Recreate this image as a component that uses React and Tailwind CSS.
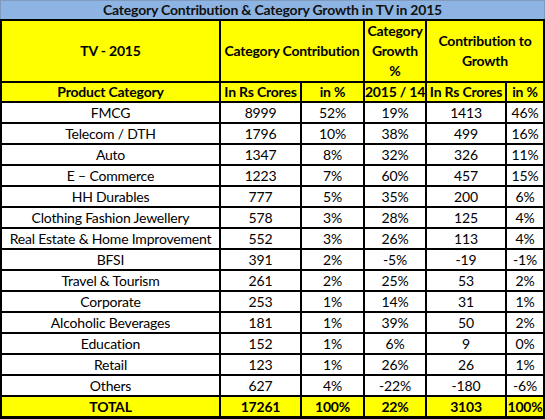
const rows = [
  ['FMCG', '8999', '52%', '19%', '1413', '46%'],
  ['Telecom / DTH', '1796', '10%', '38%', '499', '16%'],
  ['Auto', '1347', '8%', '32%', '326', '11%'],
  ['E – Commerce', '1223', '7%', '60%', '457', '15%'],
  ['HH Durables', '777', '5%', '35%', '200', '6%'],
  ['Clothing Fashion Jewellery', '578', '3%', '28%', '125', '4%'],
  ['Real Estate & Home Improvement', '552', '3%', '26%', '113', '4%'],
  ['BFSI', '391', '2%', '-5%', '-19', '-1%'],
  ['Travel & Tourism', '261', '2%', '25%', '53', '2%'],
  ['Corporate', '253', '1%', '14%', '31', '1%'],
  ['Alcoholic Beverages', '181', '1%', '39%', '50', '2%'],
  ['Education', '152', '1%', '6%', '9', '0%'],
  ['Retail', '123', '1%', '26%', '26', '1%'],
  ['Others', '627', '4%', '-22%', '-180', '-6%'],
];

const subHeads = ['Product Category', 'In Rs Crores', 'in %', '2015 / 14', 'In Rs Crores', 'in %'];
const total = ['TOTAL', '17261', '100%', '22%', '3103', '100%'];

export default function App() {
  return (
    <div
      className="w-[545px] h-[419px] bg-white text-black text-[14px] tracking-[-0.2px] leading-none"
      style={{ fontFamily: 'Lato, "Open Sans", sans-serif' }}
    >
      <div className="h-[19px] bg-[#8db4e2] border-t border-x border-[#7f9cc0] flex items-center justify-center font-bold text-[#111]">
        Category Contribution &amp; Category Growth in TV in 2015
      </div>

      <div className="grid grid-cols-[217px_79px_61px_60px_78px_36px] grid-rows-[60px_18px_repeat(15,19px)] gap-[2px] bg-black p-[2px] pb-[3px]">
        {/* header row 1 */}
        <div className="bg-[#ffff00] flex items-center justify-center font-bold">TV - 2015</div>
        <div className="col-span-2 bg-[#ffff00] flex items-center justify-center font-bold whitespace-nowrap">
          Category Contribution
        </div>
        <div className="bg-[#ffff00] flex flex-col items-center justify-center font-bold leading-[20px]">
          <span>Category</span>
          <span>Growth</span>
          <span>%</span>
        </div>
        <div className="col-span-2 bg-[#ffff00] flex flex-col items-center justify-center font-bold leading-[20px]">
          <span>Contribution to</span>
          <span>Growth</span>
        </div>

        {/* header row 2 */}
        {subHeads.map((h, i) => (
          <div key={'h' + i} className="bg-[#ffff00] flex items-center justify-center font-bold whitespace-nowrap">
            {h}
          </div>
        ))}

        {/* data */}
        {rows.map((r, ri) =>
          r.map((c, ci) => (
            <div key={ri + '-' + ci} className="bg-white flex items-center justify-center whitespace-nowrap">
              {c}
            </div>
          ))
        )}

        {/* total */}
        {total.map((t, i) => (
          <div key={'t' + i} className="bg-[#ffff00] flex items-center justify-center font-bold">
            {t}
          </div>
        ))}
      </div>
    </div>
  );
}
